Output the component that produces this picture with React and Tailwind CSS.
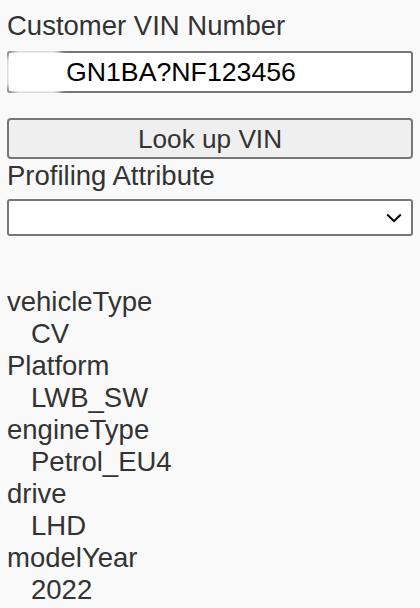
export default function App() {
  const attrs = [
    ["vehicleType", "CV"],
    ["Platform", "LWB_SW"],
    ["engineType", "Petrol_EU4"],
    ["drive", "LHD"],
    ["modelYear", "2022"],
  ];

  return (
    <div className="min-h-screen bg-[#f9f9f9] px-[7px] pt-[10px] font-['Liberation_Sans'] text-[27.5px] leading-[32px] text-[#333]">
      <label className="block">Customer VIN Number</label>
      <div className="relative mt-[9px] flex h-[42px] items-center rounded-[3px] border-2 border-[#767676] bg-white">
        <span className="pl-[57px] text-[26.7px] text-black">GN1BA?NF123456</span>
        <div className="absolute -left-[3px] -top-[3px] h-[44px] w-[60px] rounded-[14px] bg-white blur-[2px]" />
      </div>
      <button
        type="button"
        className="mt-[25px] flex h-[41px] w-full items-center justify-center rounded-[4px] border-2 border-[#767676] bg-[#efefef] text-[26.2px] text-[#333]"
      >
        Look up VIN
      </button>
      <label className="mt-[1px] block">Profiling Attribute</label>
      <div className="mt-[7px] flex h-[37px] items-center justify-end rounded-[3px] border-2 border-[#767676] bg-white pr-[9px]">
        <svg width="16" height="10" viewBox="0 0 16 10" fill="none" stroke="black" strokeWidth="2">
          <path d="M1.2 1.5 L8 8.2 L14.8 1.5" />
        </svg>
      </div>
      <div className="mt-[50px]">
        {attrs.map(([k, v]) => (
          <div key={k}>
            <div>{k}</div>
            <div className="pl-[24px]">{v}</div>
          </div>
        ))}
      </div>
    </div>
  );
}
